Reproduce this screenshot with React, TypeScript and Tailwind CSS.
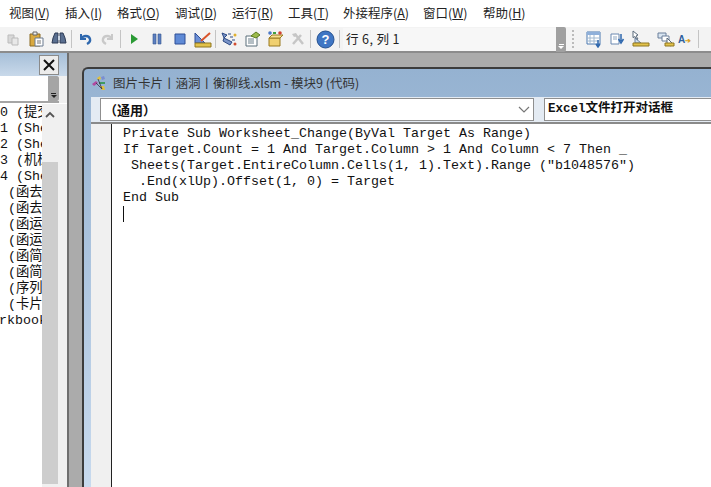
import React from "react";

const cjk = { fontFamily: '"Noto Sans CJK SC", "Noto Sans", sans-serif' };
const mono = { fontFamily: '"Liberation Mono", "Noto Sans CJK SC", monospace' };

function Menu({ label, k, w }: { label: string; k: string; w: string }) {
  return (
    <span className={`${w} shrink-0 whitespace-nowrap text-[12.5px] text-[#222]`}>
      {label}(<span className="underline">{k}</span>)
    </span>
  );
}

function Ic({ w = "w-[23px]", children }: { w?: string; children: React.ReactNode }) {
  return (
    <span className={`${w} h-[18px] shrink-0 flex items-center justify-center`}>
      <svg width="18" height="18" viewBox="0 0 18 18">{children}</svg>
    </span>
  );
}
const Sep = () => <span className="w-[1px] h-[18px] mx-[1px] bg-[#c4c4c4] shrink-0" />;

export default function App() {
  const rows = ["0 (提交单", "1 (Sheet", "2 (Sheet", "3 (机械表", "4 (Sheet", " (函去年", " (函去年", " (函运营", " (函运营", " (函简表", " (函简表", " (序列)", " (卡片样"];
  return (
    <div className="w-[711px] h-[487px] overflow-hidden flex flex-col bg-white" style={cjk}>
      <div className="h-[27px] shrink-0 bg-white flex items-center pl-[9px] pt-[-1px]">
        <Menu label="视图" k="V" w="w-[56px]" />
        <Menu label="插入" k="I" w="w-[52px]" />
        <Menu label="格式" k="O" w="w-[58px]" />
        <Menu label="调试" k="D" w="w-[57px]" />
        <Menu label="运行" k="R" w="w-[56px]" />
        <Menu label="工具" k="T" w="w-[55px]" />
        <Menu label="外接程序" k="A" w="w-[80px]" />
        <Menu label="窗口" k="W" w="w-[60px]" />
        <Menu label="帮助" k="H" w="w-[50px]" />
      </div>
      <div className="h-[26px] shrink-0 bg-[#f3f3f3] border-b-2 border-[#8c8c8c] flex items-center pl-[1px]">
        <Ic><path d="M4 5h6v8H4z" fill="#d8d8d8" stroke="#bbb" /><path d="M8 8h6v7H8z" fill="#e8e8e8" stroke="#bbb" /></Ic>
        <Ic><path d="M3 4h10v12H3z" fill="#d9a93f" stroke="#8b6a22" /><path d="M6 2h4v3H6z" fill="#eee" stroke="#666" /><path d="M8 8h8v8H8z" fill="#fff" stroke="#6a7a90" /><path d="M10 11h4M10 13h4" stroke="#777" /></Ic>
        <Ic><path d="M3 8l2-5h3v10H2z" fill="#5a6f90" stroke="#2d3b55" /><path d="M15 8l-2-5h-3v10h6z" fill="#5a6f90" stroke="#2d3b55" /><path d="M8 6h2v4H8z" fill="#c9d4e2" /></Ic>
        <Sep />
        <Ic><path d="M5 4v5h5" fill="none" stroke="#2f68ae" strokeWidth="2" /><path d="M5 9c2-4 8-4 9 0 .6 2.400-1 4-3 5" fill="none" stroke="#2f68ae" strokeWidth="2.400" /></Ic>
        <Ic><path d="M13 4v5H8" fill="none" stroke="#c9c9c9" strokeWidth="2" /><path d="M13 9c-2-4-8-4-9 0-.6 2.400 1 4 3 5" fill="none" stroke="#c9c9c9" strokeWidth="2.400" /></Ic>
        <Sep />
        <Ic><path d="M6 4l7 5-7 5z" fill="#2a9a34" /></Ic>
        <Ic><path d="M5 4h3v10H5zM10 4h3v10h-3z" fill="#5c7fc0" stroke="#33558f" strokeWidth=".6" /></Ic>
        <Ic><path d="M4 4h10v10H4z" fill="#5f8ad6" stroke="#2f4f96" /></Ic>
        <Ic><path d="M1 3l10 10H1z" fill="#6c8fd6" stroke="#2f4f96" /><path d="M1 13h16v4H1z" fill="#e2c24a" stroke="#8f7620" /><path d="M7 11l9-8" stroke="#d9542b" strokeWidth="2" /></Ic>
        <Sep />
        <Ic><path d="M2 3l5 2-3 3zM4 8l8 4-2 3-7-4z" fill="#7a94c8" stroke="#2d4a84" /><path d="M8 4h3M10 7h3M12 10h3" stroke="#2d4a84" /><circle cx="15" cy="5" r="1.500" fill="#e0b030" /><circle cx="15" cy="14" r="1.500" fill="#d04c30" /></Ic>
        <Ic><path d="M3 6h11v10H3z" fill="#fff" stroke="#5a6f7a" /><path d="M5 9h6M5 11h6M5 13h6" stroke="#6a7f8a" /><path d="M8 6l5-4 4 3-4 3z" fill="#9cba4a" stroke="#5a7a20" /></Ic>
        <Ic><path d="M3 8h11v8H3z" fill="#f0d070" stroke="#9a7a20" /><path d="M3 8l3-3h11l-3 3z" fill="#f8e090" stroke="#9a7a20" /><circle cx="4" cy="3" r="1.800" fill="#4a78c8" /><circle cx="14" cy="3" r="1.800" fill="#d04030" /><path d="M7 3h3" stroke="#40a040" strokeWidth="2" /></Ic>
        <Ic><path d="M4 14L12 5M6 4l8 10" stroke="#c6c6c6" strokeWidth="2.500" /><path d="M3 4l4-1 1 3-3 1z" fill="#c6c6c6" /></Ic>
        <Sep />
        <span className="w-[26px] shrink-0 flex justify-center">
          <svg width="19" height="19" viewBox="0 0 19 19"><circle cx="9.500" cy="9.500" r="8.500" fill="#3f76c4" stroke="#24508f" /><text x="9.500" y="14" textAnchor="middle" fontSize="13" fontWeight="700" fill="#fff" fontFamily="Liberation Sans">?</text></svg>
        </span>
        <Sep />
        <div className="ml-[2px] w-[213px] h-[23px] shrink-0 bg-[#f7f7f7] flex items-center pl-[3px] text-[12.5px] tracking-[0.4px] text-[#222] whitespace-pre">行 6, 列 1</div>
        <div className="w-[10px] h-[25px] shrink-0 bg-[#a0a0a0] rounded-r-[2px] flex flex-col items-center justify-end pb-[3px] gap-[1px]">
          <span className="w-[5px] h-[1px] bg-white" />
          <span className="w-0 h-0 border-x-[3px] border-x-transparent border-t-[3px] border-t-white" />
        </div>
        <span className="w-[10px] ml-[6px] h-[18px] shrink-0 flex flex-col gap-[2px]">
          {[0, 1, 2, 3, 4].map((i) => <span key={i} className="w-[2px] h-[2px] bg-[#bbb]" />)}
        </span>
        <Ic><path d="M2 2h13v12H2z" fill="#fff" stroke="#4a78b0" /><path d="M2 2h13v3H2z" fill="#8fb0da" /><path d="M5 5v9M9 5v9M2 8h13M2 11h13" stroke="#a0b8d0" /><path d="M13 10v6M11 14l2 3 2-3" stroke="#2f68ae" strokeWidth="1.500" fill="none" /></Ic>
        <Ic><path d="M3 4h8v10H3z" fill="#fff" stroke="#6a88b0" /><path d="M5 7h4M5 9h4" stroke="#8fa6c0" /><path d="M13 4v7M10.500 9l2.500 4 2.500-4" stroke="#2f68ae" strokeWidth="1.500" fill="none" /></Ic>
        <Ic w="w-[25px]"><path d="M1 1l5 4-2 1 2 3-1 .6-2-3-2 1z" fill="#fff" stroke="#5a6a7a" /><path d="M3 8l6 5H3z" fill="#cfe0f0" stroke="#6a7f9a" /><path d="M1 13h16v3H1z" fill="#e2c24a" stroke="#8f7620" /></Ic>
        <Ic w="w-[25px]"><path d="M1 3h8v5H1z" fill="#d8e4f0" stroke="#6a7f9a" /><path d="M5 6h7v5H5z" fill="#fff" stroke="#6a7f9a" /><path d="M10 8l5 5-2 .5 1 2-1 .5-1-2-2 1z" fill="#fff" stroke="#5a6a7a" /><path d="M8 13h9v3H8z" fill="#e2c24a" stroke="#8f7620" /></Ic>
        <span className="w-[18px] shrink-0 text-[10px] font-bold text-[#2f5f9e] whitespace-nowrap" style={{ fontFamily: "Liberation Sans" }}>A<span className="text-[#d9a020] text-[7px]">➔</span></span>
        <span className="w-[1px] h-[18px] ml-[2px] bg-[#c4c4c4] shrink-0" />
      </div>

      <div className="flex-1 flex min-h-0">
        {/* project pane */}
        <div className="w-[67px] shrink-0 flex flex-col bg-[#f0f0f0]">
          <div className="h-[23px] shrink-0 bg-gradient-to-b from-[#a6bfd8] to-[#c9d9ea] flex justify-end items-start pr-[8px] pt-[2px]">
            <div className="w-[20px] h-[20px] bg-[#ececec] border border-[#8a8a8a] flex items-center justify-center">
              <svg width="14" height="14" viewBox="0 0 14 14"><path d="M2 2l10 10M12 2L2 12" stroke="#111" strokeWidth="2" /></svg>
            </div>
          </div>
          <div className="h-[27px] w-[59px] shrink-0 bg-white flex justify-end border-b-2 border-[#a5a5a5]">
            <div className="w-[11px] bg-[#a5a5a5] rounded-r-[2px] flex flex-col items-center justify-end pb-[3px] gap-[1px]">
              <span className="w-[5px] h-[1px] bg-[#222]" />
              <span className="w-0 h-0 border-x-[3px] border-x-transparent border-t-[3px] border-t-[#222]" />
            </div>
          </div>
          <div className="flex-1 flex min-h-0 border-t border-white">
            <div className="w-[42px] shrink-0 overflow-hidden bg-white pt-[1px] text-[13.33px] leading-[16px] text-[#111] whitespace-pre" style={mono}>
              {rows.map((r) => <div key={r + Math.random()} className="h-[16px]">{r}</div>)}
              <div className="h-[16px] -ml-[1px]">rkbook</div>
            </div>
            <div className="w-[16px] shrink-0 flex flex-col bg-[#f0f0f0]">
              <div className="h-[58px] shrink-0 flex justify-center pt-[7px]">
                <svg width="10" height="7" viewBox="0 0 10 7"><path d="M1 6l4-4 4 4" fill="none" stroke="#555" strokeWidth="1.800" /></svg>
              </div>
              <div className="flex-1 bg-[#cdcdcd] mb-[3px]" />
            </div>
          </div>
        </div>
        {/* MDI */}
        <div className="flex-1 min-w-0 bg-[#ababab] border-l-2 border-l-[#6f6f6f] pl-[13px] pt-[14px] overflow-hidden">
          <div className="w-[640px] h-full bg-gradient-to-b from-[#95b2d1] to-[#c8daee] border-t-2 border-l-2 border-[#3c3c3c] rounded-tl-[6px] flex flex-col">
            <div className="h-[28px] shrink-0 flex items-center pl-[6px] gap-[5px] text-[12.5px] text-[#333] whitespace-nowrap">
              <svg width="18" height="18" viewBox="0 0 18 18">
                <path d="M2 10l4-3 2 2-4 3z" fill="#b04aa0" /><path d="M7 4l3-2 1 3-3 1z" fill="#e0c040" /><path d="M11 3l3-1 1 3-3 1z" fill="#7a8ed0" /><path d="M9 8h6v2H9z" fill="#3f9a60" /><path d="M10 12l4 0 1 4-3 0z" fill="#e0c040" /><path d="M6 9l6 6M8 5l4 10" stroke="#334" strokeWidth=".8" />
              </svg>
              <span>图片卡片丨涵洞丨衡柳线.xlsm - 模块9 (代码)</span>
            </div>
            <div className="flex-1 min-h-0 flex flex-col bg-[#f0f0f0] ml-[7px]">
              <div className="h-[27px] shrink-0 bg-[#e4ebf3] flex items-center gap-[10px] pl-[9px] border-b-2 border-[#8a8a8a]">
                <div className="w-[434px] h-[23px] shrink-0 bg-white border border-[#8f8f8f] flex items-center justify-between pl-[3px] pr-[3px] text-[13px] font-bold text-[#111]">
                  <span>（通用）</span>
                  <svg width="12" height="8" viewBox="0 0 12 8"><path d="M1 1l5 5 5-5" fill="none" stroke="#777" strokeWidth="1.200" /></svg>
                </div>
                <div className="w-[180px] h-[23px] shrink-0 bg-white border border-[#8f8f8f] flex items-center pl-[3px] text-[12.5px] font-bold text-[#111] whitespace-nowrap" style={mono}>Excel文件打开对话框</div>
              </div>
              <div className="flex-1 flex min-h-0">
                <div className="w-[21px] shrink-0 bg-[#f0f0f0] border-r-[1px] border-[#222]" />
                <div className="flex-1 bg-white pl-[11px] pt-[2px] text-[13.33px] leading-[16px] text-[#111] whitespace-pre" style={mono}>
                  <div>Private Sub Worksheet_Change(ByVal Target As Range)</div>
                  <div>If Target.Count = 1 And Target.Column &gt; 1 And Column &lt; 7 Then _</div>
                  <div> Sheets(Target.EntireColumn.Cells(1, 1).Text).Range ("b1048576")</div>
                  <div>  .End(xlUp).Offset(1, 0) = Target</div>
                  <div>End Sub</div>
                  <div className="w-[1px] h-[16px] bg-[#111]" />
                </div>
              </div>
            </div>
          </div>
        </div>
      </div>
    </div>
  );
}
